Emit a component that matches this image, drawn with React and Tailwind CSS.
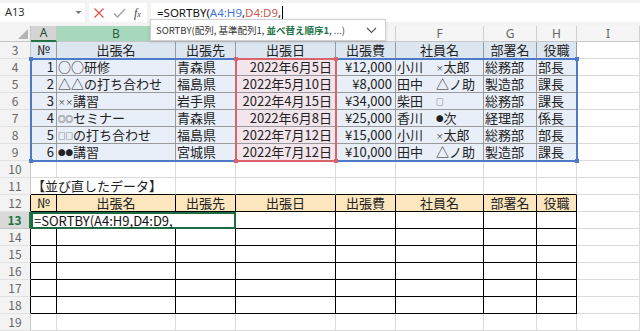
import React from "react";

const GRID = "grid grid-cols-[31px_26px_119px_60px_100px_60px_88px_53px_40px_63px]";

const base = "h-[17px] border-r border-b whitespace-nowrap leading-[16px] text-[13px]";
const plain = `${base} border-[#dadada] bg-white`;
const t1head = `${base} border-[#9a9a9a] bg-[#dce6f1] text-center text-[#222]`;
const t1cell = `${base} border-[#9a9a9a] bg-[#e9eff8] text-[#222]`;
const t1pink = `${base} border-[#9a9a9a] bg-[#f3e5ec] text-[#222]`;
const t2head = `${base} border-black bg-[#fbe6be] text-center text-[#222]`;
const t2cell = `${base} border-black bg-white`;

// little symbols are drawn smaller than the kanji in the sheet
function S({ children }) {
  return <span className="text-[7.5px] align-[1px]">{children}</span>;
}

const trips = [
  ["1", <>○○研修</>, "青森県", "2022年6月5日", "¥12,000", <>小川　<S>×</S>太郎</>, "総務部", "部長"],
  ["2", <>△△の打ち合わせ</>, "福島県", "2022年5月10日", "¥8,000", <>田中　△ノ助</>, "製造部", "課長"],
  ["3", <><S>××</S>講習</>, "岩手県", "2022年4月15日", "¥34,000", <>柴田　<S>□</S></>, "総務部", "課長"],
  ["4", <><S>◎◎</S>セミナー</>, "青森県", "2022年6月8日", "¥25,000", <>香川　<S>●</S>次</>, "経理部", "係長"],
  ["5", <><S>□□</S>の打ち合わせ</>, "福島県", "2022年7月12日", "¥15,000", <>小川　<S>×</S>太郎</>, "総務部", "部長"],
  ["6", <><S>●●</S>講習</>, "宮城県", "2022年7月12日", "¥10,000", <>田中　△ノ助</>, "製造部", "課長"],
];

const heads = ["№", "出張名", "出張先", "出張日", "出張費", "社員名", "部署名", "役職"];

function RowHead({ n, tone }) {
  if (tone === "active") {
    return (
      <div className="h-[17px] border-b border-b-[#c6c6c6] border-r-2 border-r-[#217346] bg-[#d9d9d9] text-center text-[12px] leading-[16px] font-bold text-[#217346]">
        {n}
      </div>
    );
  }
  return (
    <div className={`h-[17px] border-r border-b border-b-[#e1e1e1] bg-[#f3f3f3] text-center text-[12px] leading-[16px] text-[#666] ${tone === "dark" ? "border-r-black" : "border-r-[#c6c6c6]"}`}>
      {n}
    </div>
  );
}

function EmptyRow({ n }) {
  return (
    <>
      <RowHead n={n} />
      {Array.from({ length: 9 }, (_, i) => <div key={i} className={plain}></div>)}
    </>
  );
}

export default function App() {
  return (
    <div className="relative w-[640px] h-[331px] overflow-hidden bg-white font-['Noto_Sans_CJK_JP','Noto_Sans',sans-serif]">
      {/* formula bar */}
      <div className="h-[26px] bg-[#f3f3f3] flex items-start pt-[3px] gap-[4px]">
        <div className="w-[85px] h-[19px] bg-white flex items-center justify-between pl-[5px] pr-[3px]">
          <span className="text-[11px] text-[#333] font-['Noto_Sans',sans-serif]">A13</span>
          <svg width="7" height="5" viewBox="0 0 7 5"><path d="M0.5 1 L3.5 4 L6.5 1 Z" fill="#777" /></svg>
        </div>
        <div className="w-[58px] h-[19px] bg-white flex items-center pl-[4px] gap-[8px]">
          <svg width="12" height="12" viewBox="0 0 12 12"><path d="M1.5 1.5 L10.5 10.5 M10.5 1.5 L1.5 10.5" stroke="#d9534f" strokeWidth="1.3" /></svg>
          <svg width="13" height="12" viewBox="0 0 13 12"><path d="M1 6.5 L4.5 10 L12 2" stroke="#a0a0a0" strokeWidth="1.3" fill="none" /></svg>
          <span className="text-[12px] italic text-[#444] font-['Liberation_Serif',serif] leading-none">f<span className="text-[8px]">x</span></span>
        </div>
        <div className="flex-1 h-[19px] bg-white pl-[6px] flex items-center text-[11.5px] text-[#111] font-['Noto_Sans',sans-serif]">
          <span>=SORTBY(</span>
          <span className="text-[#3f74d6]">A4:H9</span>
          <span>,</span>
          <span className="text-[#d1564c]">D4:D9</span>
          <span>,</span>
          <span className="w-px h-[13px] bg-black ml-[1px]"></span>
        </div>
      </div>

      {/* sheet */}
      <div className="relative">
        <div className={GRID}>
          {/* column letters */}
          <div className="h-[16px] border-r border-b border-[#c6c6c6] bg-[#f3f3f3] flex items-end justify-end p-[2px]">
            <svg width="10" height="10" viewBox="0 0 10 10"><path d="M10 0 L10 10 L0 10 Z" fill="#b4b4b4" /></svg>
          </div>
          <div className="h-[16px] border-r border-r-[#c6c6c6] border-b-2 border-b-[#217346] bg-[#d4d4d4] text-center text-[12px] leading-[14px] text-[#1e4d33] font-['Noto_Sans',sans-serif]">A</div>
          <div className="h-[16px] border-r border-b border-[#c6c6c6] bg-[#a8d8bb] text-center text-[12px] leading-[15px] text-[#2f5e44] font-['Noto_Sans',sans-serif]">B</div>
          {["C", "D", "E", "F", "G", "H", "I"].map(c => (
            <div key={c} className="h-[16px] border-r border-b border-[#d0d0d0] border-b-[#c6c6c6] bg-[#f5f5f5] text-center text-[12px] leading-[15px] text-[#666] font-['Noto_Sans',sans-serif]">{c}</div>
          ))}

          {/* row 3 */}
          <RowHead n="3" />
          {heads.map(h => <div key={h} className={t1head}>{h}</div>)}
          <div className={plain}></div>

          {/* rows 4 - 9 */}
          {trips.map((t, i) => (
            <React.Fragment key={t[0]}>
              <RowHead n={String(i + 4)} />
              <div className={`${t1cell} text-right pr-[2px]`}>{t[0]}</div>
              <div className={`${t1cell} pl-[1px]`}>{t[1]}</div>
              <div className={`${t1cell} pl-[1px]`}>{t[2]}</div>
              <div className={`${t1pink} text-right pr-[3px]`}>{t[3]}</div>
              <div className={`${t1cell} text-right pr-[3px]`}>{t[4]}</div>
              <div className={`${t1cell} pl-[1px]`}>{t[5]}</div>
              <div className={`${t1cell} pl-[1px]`}>{t[6]}</div>
              <div className={`${t1cell} pl-[1px]`}>{t[7]}</div>
              <div className={plain}></div>
            </React.Fragment>
          ))}

          <EmptyRow n="10" />

          {/* row 11 */}
          <RowHead n="11" />
          <div className={`${base} col-span-2 border-r-[#dadada] border-b-black pl-[1px] text-[#222]`}>【並び直したデータ】</div>
          {Array.from({ length: 6 }, (_, i) => <div key={i} className={`${base} border-r-[#dadada] border-b-black`}></div>)}
          <div className={plain}></div>

          {/* row 12 */}
          <RowHead n="12" tone="dark" />
          {heads.map(h => <div key={h} className={t2head}>{h}</div>)}
          <div className={plain}></div>

          {/* row 13 */}
          <RowHead n="13" tone="active" />
          <div className="h-[17px] col-span-3 border-2 border-[#1e6b41] bg-white whitespace-nowrap text-[13px] leading-[13px] text-[#111] pl-[1px]">=SORTBY(A4:H9,D4:D9,</div>
          {Array.from({ length: 5 }, (_, i) => <div key={i} className={t2cell}></div>)}
          <div className={plain}></div>

          {/* rows 14 - 18 */}
          {["14", "15", "16", "17", "18"].map(n => (
            <React.Fragment key={n}>
              <RowHead n={n} tone="dark" />
              {Array.from({ length: 8 }, (_, i) => <div key={i} className={t2cell}></div>)}
              <div className={plain}></div>
            </React.Fragment>
          ))}

          <EmptyRow n="19" />
        </div>

        {/* range highlights while editing the formula */}
        <div className="absolute left-[30px] top-[32px] w-[548px] h-[104px] border-2 border-[#4e79c7]"></div>
        <div className="absolute left-[235px] top-[32px] w-[102px] h-[104px] border-2 border-[#d9646a]"></div>
        <div className="absolute left-[29px] top-[31px] w-[4px] h-[4px] bg-[#4e79c7]"></div>
        <div className="absolute left-[575px] top-[31px] w-[4px] h-[4px] bg-[#4e79c7]"></div>
        <div className="absolute left-[29px] top-[133px] w-[4px] h-[4px] bg-[#4e79c7]"></div>
        <div className="absolute left-[575px] top-[133px] w-[4px] h-[4px] bg-[#4e79c7]"></div>
        <div className="absolute left-[234px] top-[31px] w-[4px] h-[4px] bg-[#d9646a]"></div>
        <div className="absolute left-[334px] top-[31px] w-[4px] h-[4px] bg-[#d9646a]"></div>
        <div className="absolute left-[234px] top-[133px] w-[4px] h-[4px] bg-[#d9646a]"></div>
        <div className="absolute left-[334px] top-[133px] w-[4px] h-[4px] bg-[#d9646a]"></div>
      </div>

      {/* function hint */}
      <div className="absolute left-[150px] top-[19px] w-[236px] h-[22px] bg-white border border-[#d0d0d0] shadow-[0_1px_3px_rgba(0,0,0,0.15)] flex items-center justify-between pl-[5px] pr-[8px] text-[9.5px] text-[#333]">
        <span>
          SORTBY(配列, 基準配列1, <span className="font-bold text-[#217346]">並べ替え順序1</span>, ...)
        </span>
        <svg width="11" height="7" viewBox="0 0 11 7"><path d="M1 1 L5.5 5.5 L10 1" stroke="#555" strokeWidth="1.1" fill="none" /></svg>
      </div>
    </div>
  );
}
